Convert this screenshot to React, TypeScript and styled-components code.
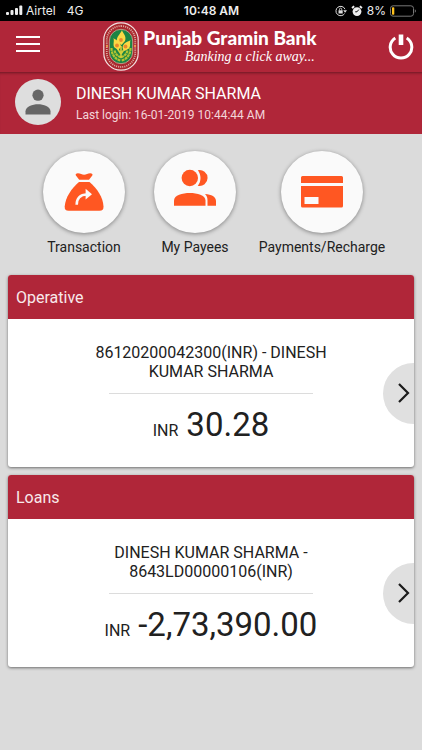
import React from "react";
import styled, { createGlobalStyle } from "styled-components";

const CRIMSON = "#b02639";
const ORANGE = "#ff5722";

const GlobalStyle = createGlobalStyle`
  *, *::before, *::after { box-sizing: border-box; }
  html { background: #dbdbdb; }
  body { margin: 0; font-family: Roboto, "Liberation Sans", sans-serif; color: #212121; }
  button { font: inherit; color: inherit; border: 0; padding: 0; background: none; cursor: pointer; }
  svg { display: block; flex: none; }
`;

const Page = styled.div`
  min-height: 100vh;
  background: #dbdbdb;
`;

const StatusBar = styled.div`
  display: grid;
  grid-template-columns: 1fr auto 1fr;
  align-items: center;
  height: 21px;
  padding: 0 5px 0 6px;
  background: #000;
  color: #eee;
  font: 12px/21px Inter, "Liberation Sans", sans-serif;
`;

const StatusGroup = styled.div<{ $end?: boolean; $gap: number }>`
  display: flex;
  align-items: center;
  justify-content: ${(p) => (p.$end ? "flex-end" : "flex-start")};
  gap: ${(p) => p.$gap}px;
`;

const Network = styled.span`
  margin-left: 8px;
`;

const Clock = styled.time`
  font-weight: 600;
`;

const Header = styled.header`
  display: flex;
  align-items: center;
  justify-content: space-between;
  height: 51px;
  padding: 0 8px 0 16px;
  background: ${CRIMSON};
  color: #fff;
`;

const IconButton = styled.button`
  display: flex;
`;

const Brand = styled.div`
  display: flex;
  align-items: center;
  gap: 4px;
  padding-right: 8px;
`;

const BrandText = styled.div`
  display: flex;
  flex-direction: column;
  align-items: flex-end;
`;

const BankName = styled.h1`
  margin: 0;
  font: 900 19px/20px Lato, "Open Sans", sans-serif;
  white-space: nowrap;
`;

const Tagline = styled.p`
  margin: 0;
  padding-right: 2px;
  font: italic 14px/18px "Liberation Serif", serif;
  white-space: nowrap;
`;

const Profile = styled.section`
  display: flex;
  align-items: center;
  gap: 15px;
  height: 62px;
  padding: 0 15px 2px;
  background: ${CRIMSON};
  box-shadow: inset 0 3px 3px -2px rgba(0, 0, 0, 0.4);
  color: #fff;
`;

const Avatar = styled.div`
  display: flex;
  align-items: center;
  justify-content: center;
  width: 46px;
  height: 46px;
  border-radius: 50%;
  background: #dedede;
`;

const ProfileText = styled.div`
  padding-top: 4px;
`;

const CustomerName = styled.h2`
  margin: 0;
  font-size: 16px;
  font-weight: 400;
  line-height: 22px;
`;

const LastLogin = styled.p`
  margin: 0;
  color: #f3d5d9;
  font-size: 12px;
  line-height: 20px;
`;

const Actions = styled.nav`
  display: grid;
  grid-template-columns: 110fr 112fr 142fr;
  padding: 17px 29px 18px;
`;

const Action = styled.button`
  display: flex;
  flex-direction: column;
  align-items: center;
  gap: 4px;
  font-size: 14px;
  line-height: 20px;
`;

const ActionDisc = styled.span`
  display: flex;
  align-items: center;
  justify-content: center;
  width: 82px;
  height: 82px;
  border-radius: 50%;
  background: #fafafa;
  box-shadow: 0 1px 4px rgba(0, 0, 0, 0.4);
`;

const Accounts = styled.main`
  display: flex;
  flex-direction: column;
  gap: 8px;
  padding: 0 8px 16px;
`;

const Card = styled.section`
  border-radius: 3px;
  background: #fff;
  box-shadow: 0 1px 3px rgba(0, 0, 0, 0.5);
  overflow: hidden;
`;

const CardTitle = styled.h3`
  margin: 0;
  padding: 1px 8px 0;
  background: ${CRIMSON};
  color: #f8e9eb;
  font-size: 16px;
  font-weight: 400;
  line-height: 43px;
`;

const CardBody = styled.div`
  display: grid;
  grid-template-columns: 31px 1fr 31px;
  align-items: center;
  height: 148px;
`;

const Summary = styled.div`
  grid-column: 2;
  display: flex;
  flex-direction: column;
  align-items: center;
  padding-top: 8px;
`;

const AccountName = styled.p`
  width: 250px;
  margin: 0;
  font-size: 16px;
  line-height: 19px;
  text-align: center;
`;

const Divider = styled.hr`
  width: 204px;
  margin: 12px 0 11px;
  border: 0;
  border-top: 1px solid #dcdcdc;
`;

const Balance = styled.p`
  margin: 0;
  font-size: 33px;
  line-height: 40px;
`;

const Currency = styled.span`
  margin-right: 8px;
  font-size: 16px;
`;

const NextButton = styled.button`
  display: flex;
  align-items: center;
  justify-content: flex-end;
  width: 31px;
  height: 61px;
  padding-right: 4px;
  border-radius: 31px 0 0 31px;
  background: #e0e0e0;
`;

function SignalIcon() {
  return (
    <svg width="17" height="11" viewBox="0 0 17 11" fill="#eee" aria-hidden="true">
      <rect x="0" y="7" width="3" height="3" rx="1" />
      <rect x="4.5" y="5" width="3" height="5" rx="1" />
      <rect x="9" y="3" width="3" height="7" rx="1" />
      <rect x="13.3" y="0.5" width="3" height="9.5" rx="1" />
    </svg>
  );
}

function RotationLockIcon() {
  return (
    <svg width="12" height="12" viewBox="0 0 12 12" fill="none" stroke="#ddd" aria-hidden="true">
      <path d="M9.600 8.600A4.700 4.700 0 1 1 10 4.200" />
      <path d="M8.200 5.200h3.800L10.100 7.800z" fill="#ddd" stroke="none" />
      <rect x="3.500" y="5.300" width="4.200" height="3.200" fill="#ddd" stroke="none" />
      <path d="M4.500 5.500V4.200a1.100 1.100 0 0 1 2.200 0v1.300" strokeWidth="0.8" />
    </svg>
  );
}

function AlarmIcon() {
  return (
    <svg width="12" height="12" viewBox="0 0 12 12" aria-hidden="true">
      <circle cx="6" cy="6.600" r="4.400" fill="#eee" />
      <path d="M1 3 3.200 1.200M11 3 8.800 1.200" stroke="#eee" strokeWidth="1.800" />
      <path d="m6 6.800 1.800-2.200M6 6.800H4.200" stroke="#000" strokeWidth="0.9" />
    </svg>
  );
}

function BatteryIcon() {
  return (
    <svg width="27" height="12" viewBox="0 0 27 12" aria-hidden="true">
      <rect x="0.5" y="0.8" width="23" height="10.400" rx="2.600" fill="none" stroke="#777" />
      <rect x="2" y="2.300" width="2.300" height="7.400" rx="0.8" fill="#ffc21c" />
      <path d="M24.800 4.200a2 2 0 0 1 0 3.600z" fill="#777" />
    </svg>
  );
}

function MenuIcon() {
  return (
    <svg width="24" height="24" viewBox="0 0 24 24" fill="#fff" aria-hidden="true">
      <path d="M0 1h24v2H0zM0 8h24v2H0zM0 15h24v2H0z" />
    </svg>
  );
}

function PowerIcon() {
  return (
    <svg width="26" height="28" viewBox="0 0 26 28" fill="none" stroke="#fff" aria-hidden="true">
      <path d="M7.300 5.100a10.800 10.800 0 1 0 11.400 0" strokeWidth="3" />
      <path d="M13 1.500v10.500" strokeWidth="4.600" />
    </svg>
  );
}

function BankCrest() {
  return (
    <svg width="36" height="49" viewBox="0 0 36 49" aria-hidden="true">
      <rect x="0.8" y="0.8" width="34.400" height="47.400" rx="17.200" fill="#a9262c" stroke="#f2dfe0" strokeWidth="1.200" />
      <rect x="3.800" y="4" width="28.400" height="41" rx="14.200" fill="none" stroke="#dba7a0" strokeWidth="1.800" strokeDasharray="1.100 1" />
      <rect x="6.300" y="7.300" width="23.400" height="34.400" rx="11.700" fill="#1b8444" stroke="#d9a79a" strokeWidth="0.8" />
      <g fill="none" stroke="#b4c432" strokeWidth="2.200" strokeDasharray="2.800 0.6">
        <path d="M8.500 26c0 6 3 11 9 12.500M27.500 26c0 6-3 11-9 12.500" />
        <path d="M11.500 28.500c1 3.500 3 5.500 6.500 7M24.500 28.500c-1 3.500-3 5.500-6.500 7" />
      </g>
      <path d="M18 36V24M18 32l-4-6M18 32l4-6" stroke="#d6cf3a" strokeWidth="1.600" fill="none" />
      <g fill="#f9d945">
        <path d="M19 8c.5 3 5 6 3 11L18.500 23 14 19c-1-4 3.500-7 5-11z" />
        <path d="M10.500 16c1.500 2 7 2.500 7.500 8.500L15.500 28l-4-2.500c-2-2.500 0-6-1-9.500z" />
        <path d="M27.500 18c-2 2-7.500 2-8 8l2 3 4.500-2.500c2-2.500.5-5.500 1.500-8.500z" />
      </g>
      <g fill="#e8892c">
        <circle cx="18" cy="18" r="1.900" />
        <circle cx="14" cy="23.500" r="1.900" />
        <circle cx="22.500" cy="24.500" r="1.900" />
      </g>
      <path d="M3 24h2M31 24h2" stroke="#f3a544" strokeWidth="1.600" />
    </svg>
  );
}

function PersonIcon() {
  return (
    <svg width="26" height="26" viewBox="0 0 26 26" fill="#666" aria-hidden="true">
      <circle cx="13" cy="6.200" r="5.600" />
      <path d="M0.500 25.500v-3.200c0-4.600 7-7 12.500-7s12.500 2.400 12.500 7v3.200z" />
    </svg>
  );
}

function MoneyBagIcon() {
  return (
    <svg width="40" height="40" viewBox="0 0 40 40" aria-hidden="true">
      <g fill={ORANGE}>
        <path d="M15.200 7.800 11.900 3.500c-.8-1.200.3-2.200 2-2.200 2.500 0 4.100 1.500 6.200 1.500s3.700-1.500 6.200-1.500c1.700 0 2.800 1 2 2.200L25 7.800z" />
        <path d="M15 10h10.500C33 16.500 39 25 39.500 34.500c.1 3-1 4.300-4 4.300H4.700c-3 0-4.200-1.300-4-4.300C1.500 25 7.500 16.500 15 10z" />
      </g>
      <path d="M12.700 32.800C12.500 26.500 16 22.500 23 22.500" fill="none" stroke="#fafafa" strokeWidth="2.600" />
      <path d="m21.600 16.700 6.400 5.600-6.400 5.300z" fill="#fafafa" />
    </svg>
  );
}

function PayeesIcon() {
  return (
    <svg width="42" height="46" viewBox="0 0 42 46" fill={ORANGE} aria-hidden="true">
      <circle cx="15.800" cy="9" r="8.200" />
      <path d="M23.800 1.200a8 8 0 1 1 0 15.600c3.600-4.300 3.600-11.300 0-15.600z" />
      <path d="M0 36.800v-5.200C0 26 8.500 24 15.800 24S31.500 26 31.500 31.600v5.200z" />
      <path d="M31 25.100C37.500 25.700 42 27.800 42 32v4.800h-8.500v-5.200c0-2.500-.5-4.700-2.500-6.500z" />
    </svg>
  );
}

function CardIcon() {
  return (
    <svg width="42" height="32" viewBox="0 0 42 32" aria-hidden="true">
      <path d="M1.500 0h39A1.500 1.500 0 0 1 42 1.500V7H0V1.500A1.500 1.500 0 0 1 1.500 0zM0 10h42V30a1.500 1.500 0 0 1-1.500 1.500h-39A1.500 1.500 0 0 1 0 30z" fill={ORANGE} />
      <path d="M3.500 21h14v7h-14z" fill="#fafafa" />
    </svg>
  );
}

function ChevronIcon() {
  return (
    <svg width="13" height="20" viewBox="0 0 13 20" fill="none" stroke="#1c1c1c" strokeWidth="2.200" aria-hidden="true">
      <path d="m2 1 9 9-9 9" />
    </svg>
  );
}

const actions = [
  { label: "Transaction", Icon: MoneyBagIcon },
  { label: "My Payees", Icon: PayeesIcon },
  { label: "Payments/Recharge", Icon: CardIcon },
];

const accounts = [
  { title: "Operative", name: "86120200042300(INR) - DINESH KUMAR SHARMA", balance: "30.28" },
  { title: "Loans", name: "DINESH KUMAR SHARMA - 8643LD00000106(INR)", balance: "-2,73,390.00" },
];

export default function App() {
  return (
    <Page>
      <GlobalStyle />
      <StatusBar>
        <StatusGroup $gap={3}>
          <SignalIcon />
          <span>Airtel</span>
          <Network>4G</Network>
        </StatusGroup>
        <Clock>10:48 AM</Clock>
        <StatusGroup $end $gap={4}>
          <RotationLockIcon />
          <AlarmIcon />
          <span>8%</span>
          <BatteryIcon />
        </StatusGroup>
      </StatusBar>
      <Header>
        <IconButton aria-label="Menu">
          <MenuIcon />
        </IconButton>
        <Brand>
          <BankCrest />
          <BrandText>
            <BankName>Punjab Gramin Bank</BankName>
            <Tagline>Banking a click away...</Tagline>
          </BrandText>
        </Brand>
        <IconButton aria-label="Log out">
          <PowerIcon />
        </IconButton>
      </Header>
      <Profile>
        <Avatar>
          <PersonIcon />
        </Avatar>
        <ProfileText>
          <CustomerName>DINESH KUMAR SHARMA</CustomerName>
          <LastLogin>Last login: 16-01-2019 10:44:44 AM</LastLogin>
        </ProfileText>
      </Profile>
      <Actions>
        {actions.map(({ label, Icon }) => (
          <Action key={label}>
            <ActionDisc>
              <Icon />
            </ActionDisc>
            {label}
          </Action>
        ))}
      </Actions>
      <Accounts>
        {accounts.map((account) => (
          <Card key={account.title}>
            <CardTitle>{account.title}</CardTitle>
            <CardBody>
              <Summary>
                <AccountName>{account.name}</AccountName>
                <Divider />
                <Balance>
                  <Currency>INR</Currency>
                  {account.balance}
                </Balance>
              </Summary>
              <NextButton aria-label={`Next ${account.title} account`}>
                <ChevronIcon />
              </NextButton>
            </CardBody>
          </Card>
        ))}
      </Accounts>
    </Page>
  );
}
